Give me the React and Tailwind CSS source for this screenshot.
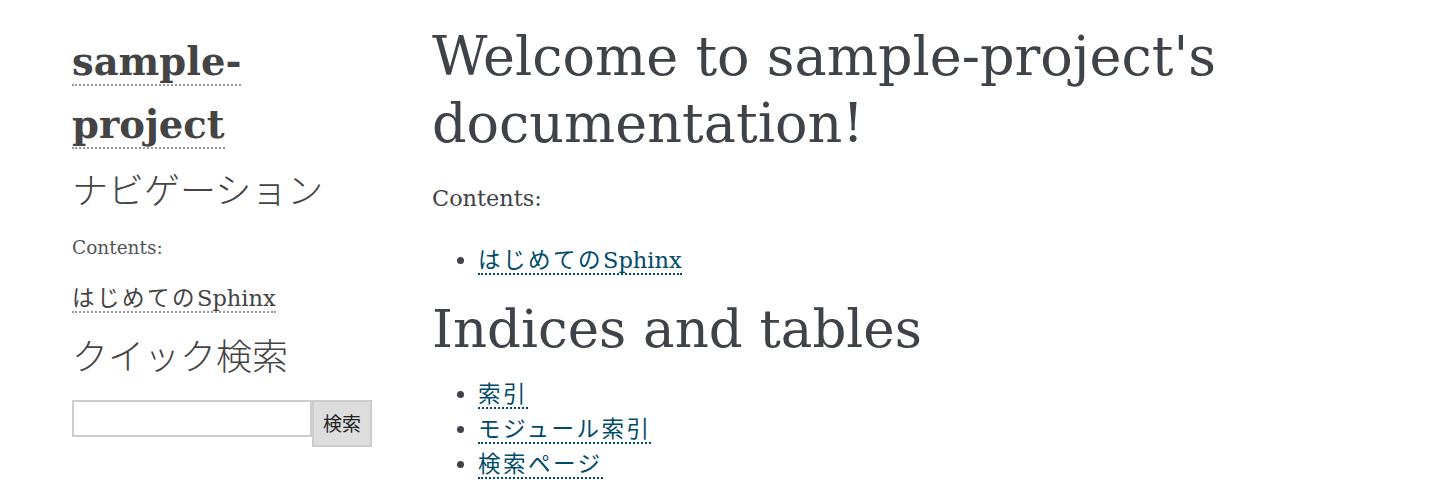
import React from "react";

const serif = "font-['DejaVu_Serif','Noto_Sans_CJK_JP',serif]";
const jp = "tracking-[2.5px]";

function MainLink({ children }) {
  return (
    <a className="text-[#004B6B] border-b-2 border-dotted border-[#004B6B] no-underline">{children}</a>
  );
}

export default function App() {
  return (
    <div className={`flex bg-white w-[1445px] h-[504px] overflow-hidden text-[#3E4349] ${serif}`}>
      <aside className="w-[432px] pl-[72px] pr-[60px] shrink-0">
        <h1 className="mt-[30px] text-[38.5px] leading-[63px] font-bold text-[#444] w-[250px]">
          <a className="border-b-2 border-dotted border-[#999]">sample-project</a>
        </h1>
        <h3 className="mt-[8px] text-[36px] leading-[48px] text-[#444] font-['Noto_Sans_CJK_JP',sans-serif] font-light">
          ナビゲーション
        </h3>
        <p className="mt-[22px] text-[18.5px] leading-[28px] text-[#555]">Contents:</p>
        <ul className="mt-[19px] text-[22.5px] leading-[34px] text-[#444]">
          <li>
            <a className="border-b-2 border-dotted border-[#999]">
              <span className={jp}>はじめての</span>Sphinx
            </a>
          </li>
        </ul>
        <h3 className="mt-[15px] text-[36px] leading-[48px] text-[#444] font-['Noto_Sans_CJK_JP',sans-serif] font-light">
          クイック検索
        </h3>
        <div className="mt-[22px] flex items-start">
          <input
            type="text"
            className="w-[240px] h-[37px] border-2 border-[#ccc] bg-white outline-none shrink-0"
          />
          <button className="w-[60px] h-[47px] shrink-0 bg-[#ddd] border-2 border-[#ccc] text-[19px] text-[#222] font-['Noto_Sans_CJK_JP',sans-serif] flex items-center justify-center">
            検索
          </button>
        </div>
      </aside>
      <main className="flex-1">
        <h1 className="mt-[23px] text-[54px] leading-[67px] font-normal">
          Welcome to sample-project's documentation!
        </h1>
        <p className="mt-[24px] text-[22.4px] leading-[34px]">Contents:</p>
        <ul className="mt-[28px] list-disc pl-[46px] text-[22.5px] leading-[35px]">
          <li>
            <MainLink>
              <span className={jp}>はじめての</span>Sphinx
            </MainLink>
          </li>
        </ul>
        <h2 className="mt-[17px] text-[53px] leading-[67px] font-normal">Indices and tables</h2>
        <ul className="mt-[15px] list-disc pl-[46px] text-[22.5px] leading-[35px]">
          <li>
            <MainLink><span className={jp}>索引</span></MainLink>
          </li>
          <li>
            <MainLink><span className={jp}>モジュール索引</span></MainLink>
          </li>
          <li>
            <MainLink><span className={jp}>検索ページ</span></MainLink>
          </li>
        </ul>
      </main>
    </div>
  );
}
